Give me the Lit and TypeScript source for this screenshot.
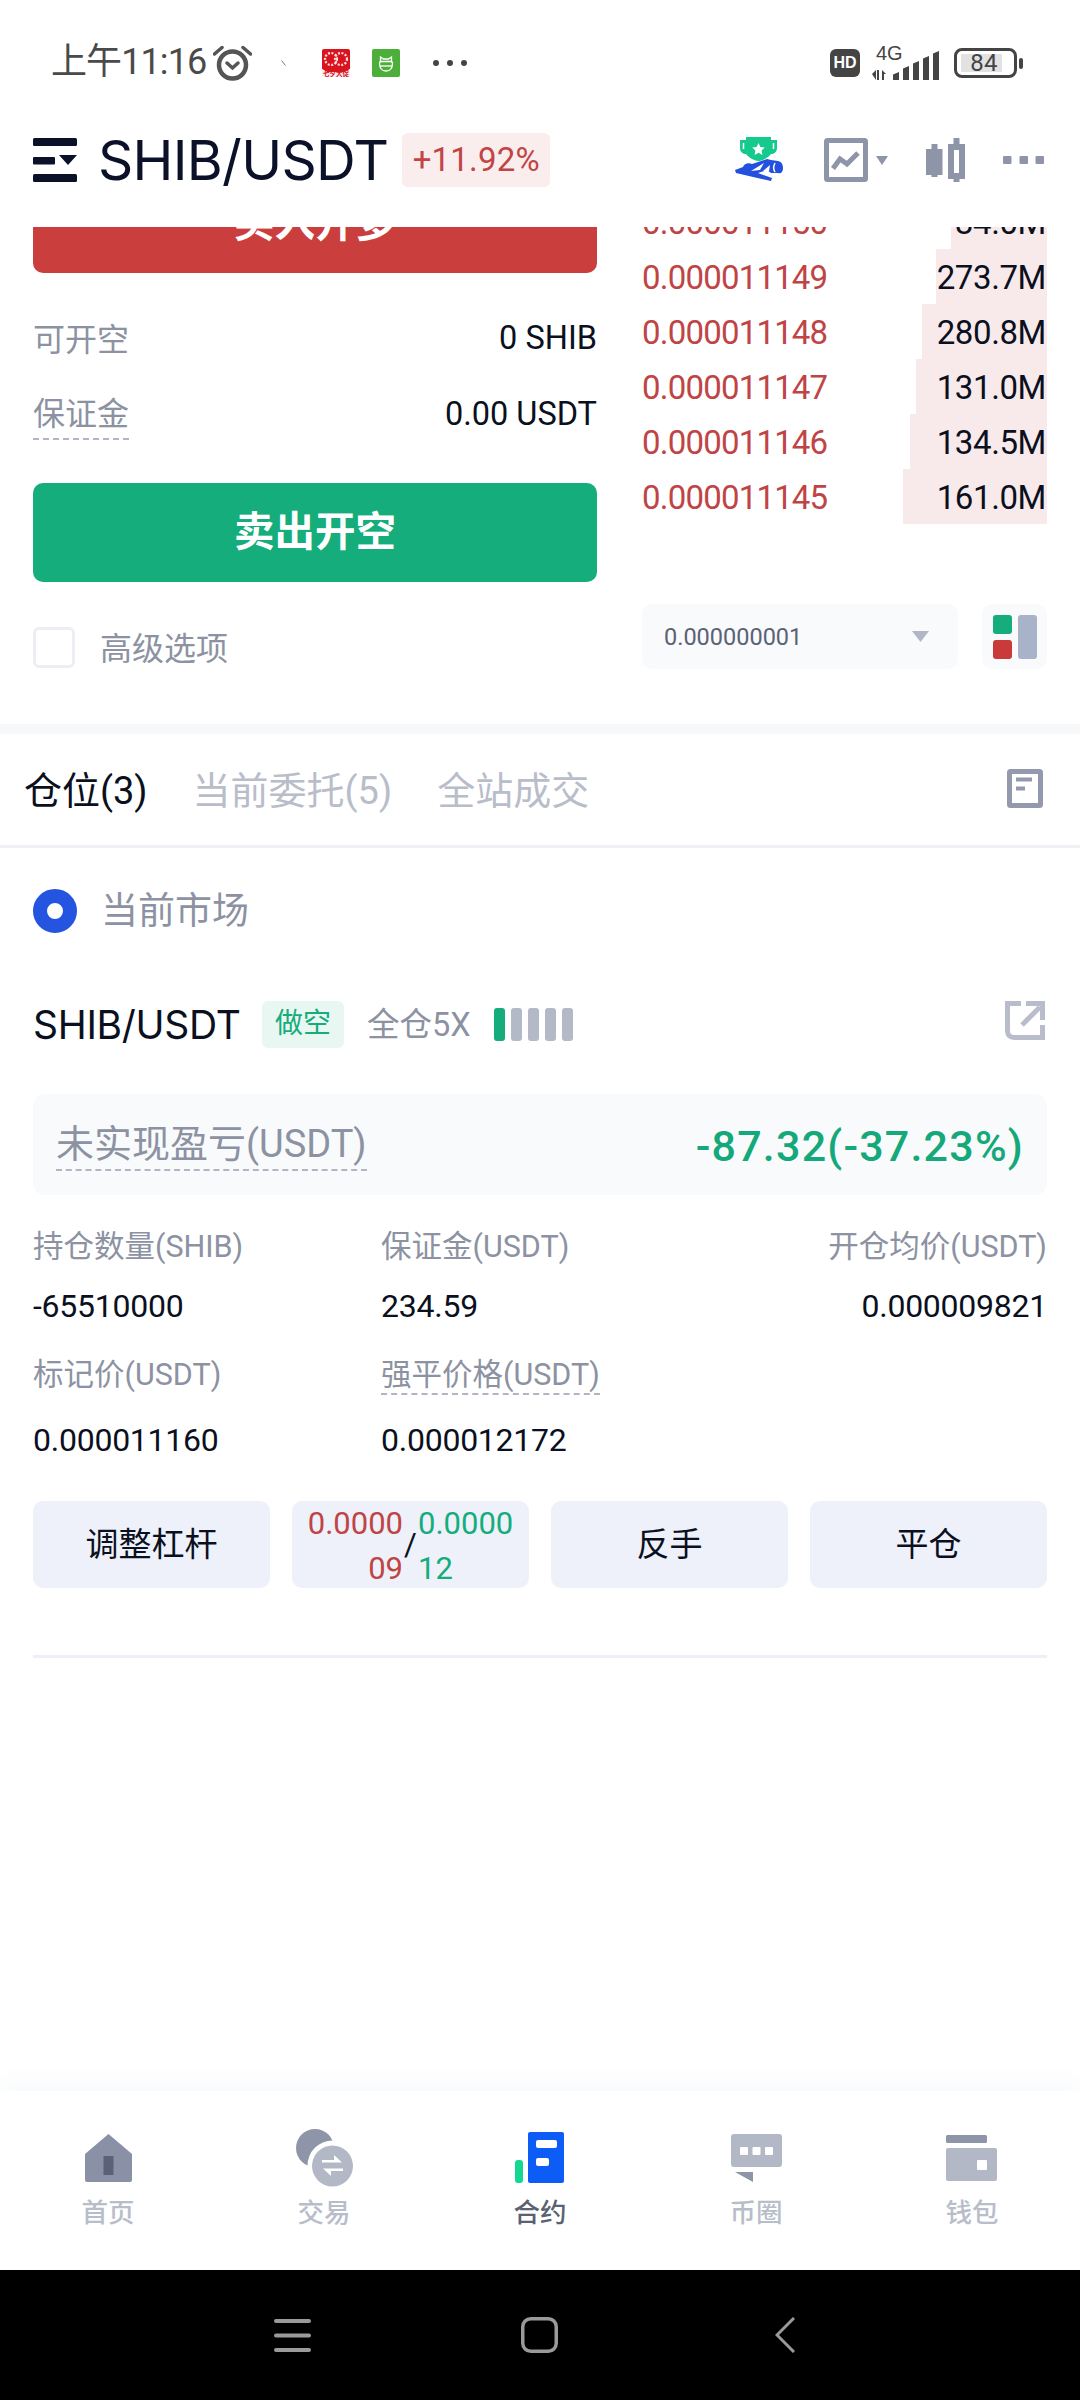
import { LitElement, html, css, svg } from "lit";
import { customElement } from "lit/decorators.js";

const book = [
  ["0.000011150", "84.0M", 96],
  ["0.000011149", "273.7M", 111],
  ["0.000011148", "280.8M", 125],
  ["0.000011147", "131.0M", 131],
  ["0.000011146", "134.5M", 137],
  ["0.000011145", "161.0M", 144],
] as const;

const nav = [
  { t: "首页", w: 47, h: 48, vb: "0 0 47 48", i: svg`<path d="M23.5 0L47 20V46q0 2-2 2H2q-2 0-2-2V20Z" fill="#8a90a5"/><rect x="18.500" y="22" width="10" height="19" fill="#5b6178"/>` },
  { t: "交易", w: 57, h: 58, vb: "0 0 57 58", i: svg`<circle cx="19" cy="19" r="19" fill="#8f95a8"/><circle cx="36.500" cy="36.500" r="25" fill="#fff"/><circle cx="36.500" cy="37" r="20.500" fill="#b3b8c7"/><path d="M26 33.500H46L38 26V31H26Z M47 39.500H27L35 47V42H47Z" fill="#fff"/>` },
  { t: "合约", w: 50, h: 52, vb: "0 0 50 52", on: true, i: svg`<rect y="28" width="8" height="23" rx="3" fill="#12d992"/><rect x="13" width="36" height="51" rx="2" fill="#0d5cf5"/><rect x="21" y="8" width="21" height="8" rx="2" fill="#fff"/><rect x="21" y="26" width="13" height="8" rx="2" fill="#fff"/>` },
  { t: "币圈", w: 51, h: 48, vb: "0 0 51 48", i: svg`<rect width="51" height="33" rx="3" y="0" fill="#b3b8c7"/><rect x="9" y="13" width="8" height="8" rx="1" fill="#fff"/><rect x="21.500" y="13" width="8" height="8" rx="1" fill="#fff"/><rect x="34" y="13" width="8" height="8" rx="1" fill="#fff"/><path d="M4 38H22V48Z" fill="#8f95a8"/>` },
  { t: "钱包", w: 52, h: 47, vb: "0 0 52 47", i: svg`<rect width="41" height="8" rx="1.500" fill="#8f95a8"/><rect y="13" width="51" height="33" rx="2" fill="#b3b8c7"/><rect x="31" y="25" width="10" height="10" rx="1" fill="#fff"/>` },
];

@customElement("app-root")
export class AppRoot extends LitElement {
  static styles = css`
    :host {
      display: flex;
      flex-direction: column;
      width: 1080px;
      height: 2400px;
      background: #fff;
      overflow: hidden;
      color: #0a1020;
      font-family: "Roboto", "Noto Sans CJK SC", sans-serif;
    }
    svg { display: block; flex: none; }
    .status {
      height: 110px; flex: none; box-sizing: border-box; padding: 16px 0 0 51px;
      display: flex; align-items: center; color: #4a4a4a;
    }
    .time { font-size: 36px; line-height: 40px; padding-bottom: 2px; letter-spacing: -0.9px; width: 162px; white-space: nowrap; }
    .tick { margin-left: 29px; }
    .appicon { margin-left: 36px; }
    .appicon + .appicon { margin-left: 22px; }
    .sdots { margin-left: 33px; }
    .sright { margin-left: auto; margin-right: 57px; display: flex; align-items: center; }
    .hd {
      width: 30px; height: 28px; border-radius: 6px; background: #444; color: #fff;
      font: 700 16px/28px "Liberation Sans", sans-serif; text-align: center;
    }
    .net { margin-left: 12px; }
    .battery { margin-left: 14px; display: flex; align-items: center; gap: 2px; }
    .cell {
      box-sizing: border-box; width: 63px; height: 30px; border: 3px solid #444; border-radius: 8px;
      padding: 3px 12px 3px 4px; display: flex;
    }
    .level {
      flex: 1; background: #e2e2e2; font-size: 24px; line-height: 18px; text-align: center;
      color: #444; white-space: nowrap; padding-left: 5px; letter-spacing: 0.3px;
    }
    .nub { width: 4px; height: 11px; border-radius: 2px; background: #444; }

    .head {
      height: 117px; flex: none; box-sizing: border-box; padding: 0 36px 17px 33px;
      display: flex; align-items: center; background: #fff; position: relative; z-index: 1;
    }
    .pair { margin-left: 21px; font: 400 55px/1 "Inter", sans-serif; letter-spacing: -0.7px; color: #0a1128; }
    .chg {
      margin-left: 14px; height: 54px; width: 148px; border-radius: 6px; background: #f9eded; color: #c24444;
      font-size: 33px; letter-spacing: 0.2px; line-height: 54px; text-align: center; white-space: nowrap;
    }
    .tools { margin-left: auto; display: flex; align-items: center; }
    .t-chart { margin-left: 40px; }
    .t-tri { margin-left: 8px; }
    .t-candle { margin-left: 38px; }
    .t-dots { margin-left: 38px; }

    .scroll { flex: 1; min-height: 0; overflow: hidden; }
    .trade {
      height: 550px; margin-top: -53px; box-sizing: border-box; padding: 0 33px; display: flex; justify-content: space-between;
    }
    .left { width: 564px; }
    .right { width: 405px; padding-top: 20px; }
    .act {
      height: 99px; border-radius: 10px; color: #fff; font-size: 40.500px; font-weight: 700; line-height: 98px; text-align: center;
    }
    .buy { background: #cb3e3e; margin-bottom: 26px; }
    .sell { background: #14ad7b; margin-top: 32px; }
    .info { height: 76px; display: flex; align-items: center; justify-content: space-between; }
    .muted { color: #8c92a2; font-size: 32px; }
    .dash { border-bottom: 2px dashed #b0b5c2; }
    .info .dash { line-height: 48px; margin-top: 4px; }
    .val { font-size: 32.500px; padding-top: 2px; }
    .opt { margin-top: 45px; height: 41px; display: flex; align-items: center; gap: 25px; }
    .opt .muted { padding-bottom: 4px; }
    .box { box-sizing: border-box; width: 42px; height: 41px; border: 3px solid #eceef3; border-radius: 6px; }

    .row { height: 55px; box-sizing: border-box; padding-top: 2px; position: relative; display: flex; align-items: center; justify-content: space-between; }
    .depth { position: absolute; right: 0; top: 0; bottom: 0; background: #f8eaea; }
    .price { position: relative; color: #c04445; font-size: 33px; letter-spacing: -0.8px; }
    .qty { position: relative; font-size: 33px; padding-right: 1px; letter-spacing: -0.4px; }
    .ctrl { margin-top: 80px; display: flex; justify-content: space-between; }
    .select {
      box-sizing: border-box; width: 316px; height: 65px; border-radius: 10px; background: #f9fafc;
      padding: 0 29px 0 22px; display: flex; align-items: center; justify-content: space-between;
      color: #5a6274; font-size: 23.500px;
    }
    .layout { width: 65px; height: 65px; border-radius: 10px; background: #f9fafc; display: flex; align-items: center; justify-content: center; }

    .gap { height: 10px; background: #f7f8fa; }
    .tabs {
      box-sizing: border-box; padding: 0 37px 5px 24px; display: flex; align-items: center;
      border-bottom: 3px solid #eef0f6; height: 114px; gap: 45px; font-size: 38px; color: #b8bdc9;
    }
    .tabs .on { color: #0a1020; }
    .tabs svg { margin-left: auto; margin-top: 3px; }
    .market { margin-top: 41px; padding-left: 33px; display: flex; align-items: center; gap: 24px; font-size: 37px; color: #8c92a2; height: 44px; }
    .market span { padding-bottom: 6px; }
    .radio { box-sizing: border-box; width: 44px; height: 44px; border-radius: 50%; border: 14px solid #2454e0; background: #fff; }

    .pos { padding: 0 33px; }
    .sym { margin-top: 68px; height: 47px; display: flex; align-items: center; }
    .sym b { font: 400 39px/1 "Inter", sans-serif; letter-spacing: -0.3px; width: 229px; }
    .tag { width: 82px; height: 47px; border-radius: 6px; background: #e8f7f1; color: #16ad7b; font-size: 28px; line-height: 46px; text-align: center; }
    .mode { margin-left: 23px; padding-bottom: 6px; color: #8c92a2; font-size: 32.500px; width: 127px; white-space: nowrap; }
    .bars { display: flex; gap: 6px; }
    .bars i { width: 11px; height: 33px; border-radius: 3px; background: #b3b9c7; }
    .bars i:first-child { background: #14ad7b; }
    .sym svg { margin-left: auto; margin-right: 2px; margin-top: -8px; }

    .pnl {
      margin-top: 46px; height: 101px; box-sizing: border-box; padding: 0 23px; border-radius: 12px; background: #f9fafc;
      display: flex; align-items: center; justify-content: space-between;
    }
    .pnl .muted { font-size: 38px; }
    .pnl .dash { line-height: 50px; }
    .pnl-v { color: #14a87a; font-size: 43px; font-weight: 500; margin-top: 2px; letter-spacing: 1.2px; white-space: nowrap; }

    .stats { margin-top: 32px; display: grid; grid-template-columns: 348px 348px 1fr; row-gap: 29px; }
    .stat { display: flex; flex-direction: column; gap: 19px; align-items: flex-start; }
    .stat.end { align-items: flex-end; }
    .stat .muted { font-size: 30.500px; line-height: 40px; white-space: nowrap; }
    .stat .num { font-size: 32px; line-height: 40px; letter-spacing: -0.25px; }
    .tall { min-height: 46px; }
    .stat .dash { line-height: 40px; padding-bottom: 1px; }

    .btns { margin-top: 41px; display: flex; gap: 22px; }
    .btn { flex: 1; height: 87px; border-radius: 10px; background: #eef1fa; font-size: 33px; line-height: 87px; text-align: center; }
    .tp { display: flex; justify-content: center; line-height: 45px; font-size: 31px; }
    .tp span { width: 97px; }
    .tp .r { color: #c04445; text-align: right; }
    .tp .g { color: #14ad7b; text-align: left; }
    .tp .sl { width: 15px; color: #0a1020; line-height: 87px; }
    .rule { margin-top: 67px; height: 3px; background: #eef0f5; }

    .nav {
      flex: none; height: 179px; box-sizing: border-box; padding-top: 38px; background: #fff;
      display: grid; grid-template-columns: repeat(5, 1fr);
      box-shadow: 0 -14px 18px rgba(60, 80, 140, 0.025);
    }
    .item { display: flex; flex-direction: column; align-items: center; font-size: 26.500px; font-weight: 500; color: #b8bdca; }
    .item.on { color: #5a6172; }
    .ic { height: 58px; display: flex; align-items: center; margin-bottom: 6px; }
    .item span { line-height: 40px; }
    .sys { flex: none; height: 130px; background: #000; display: grid; grid-template-columns: 311px 247px 237px; align-items: center; justify-items: end; }
  `;

  render() {
    return html`
      <div class="status">
        <span class="time">上午11:16</span>
        <svg width="39" height="36" viewBox="0 0 39 36" fill="none" stroke="#555" stroke-linecap="round">
          <circle cx="19.500" cy="20" r="13.500" stroke-width="4.500"/>
          <path d="M1.500 9L9 2.500M30 2.500L37.500 9" stroke-width="3.500"/>
          <path d="M14 18l5.500 5 5.500-5" stroke-width="3.500"/>
        </svg>
        <svg class="tick" width="5" height="6" viewBox="0 0 5 6" fill="none" stroke="#777"><path d="M0.500 0.500L4.500 5.500"/></svg>
        <svg class="appicon" width="28" height="28" viewBox="0 0 28 28">
          <path d="M0 2Q0 0 2 0H26Q28 0 28 2V20L23 23H5L0 20Z" fill="#d8141f"/>
          <path d="M0 20L5 23H23L28 20V28H0Z" fill="#fbe8ea"/>
          <circle cx="9" cy="10" r="6" fill="none" stroke="#fdd" stroke-width="2.200" stroke-dasharray="2 1.500"/>
          <circle cx="19" cy="10" r="6" fill="none" stroke="#fdd" stroke-width="2.200" stroke-dasharray="2 1.500"/>
          <text x="14" y="27" font-size="6.500" font-weight="700" text-anchor="middle" fill="#d8141f" font-family="Noto Sans CJK SC">七夕大促</text>
        </svg>
        <svg class="appicon" width="28" height="28" viewBox="0 0 28 28" fill="none" stroke="#fff" stroke-width="1.300">
          <rect width="28" height="28" rx="2" fill="#4caf3a" stroke="none"/>
          <path d="M8.500 13.500V8L11.500 10H16.500L19.500 8V13.500"/>
          <path d="M7.500 14Q7.500 13 8.500 12.500H19.500Q20.500 13 20.500 14C20.500 19 18 22 14 22S7.500 19 7.500 14Z"/>
          <path d="M8 17H20"/>
        </svg>
        <svg class="sdots" width="34" height="6" viewBox="0 0 34 6" fill="#444"><circle cx="3" cy="3" r="3"/><circle cx="17" cy="3" r="3"/><circle cx="31" cy="3" r="3"/></svg>
        <div class="sright">
          <div class="hd">HD</div>
          <svg class="net" width="68" height="42" viewBox="0 -3 68 42" fill="#444">
            <text x="4" y="15" font-size="20" font-family="Liberation Sans">4G</text>
            <path d="M0 29l4-4v10zM5 25h2v10H5zM10 25l4 4h-2v6h-2z"/>
            <path d="M21 29.500L27 27V35H21Z"/>
            <path d="M31 23.500L37 21V35H31Z"/>
            <path d="M41 18.500L47 16V35H41Z"/>
            <path d="M51 13.500L57 11V35H51Z"/>
            <path d="M61 8.500L67 6V35H61Z"/>
          </svg>
          <div class="battery"><div class="cell"><div class="level">84</div></div><div class="nub"></div></div>
        </div>
      </div>

      <div class="head">
        <svg width="44" height="44" viewBox="0 0 44 44" fill="#0a1128">
          <rect width="44" height="8" rx="1.500"/>
          <rect y="19" width="22" height="7.500" rx="1"/>
          <path d="M26 17H44L35 27Z"/>
          <rect y="36" width="44" height="8" rx="1.500"/>
        </svg>
        <span class="pair">SHIB/USDT</span>
        <span class="chg">+11.92%</span>
        <div class="tools">
          <svg width="50" height="46" viewBox="0 0 50 46">
            <path d="M12 0H37V3H43V11C43 15 40 17 37 17C34 21 28 24 24.500 24C21 24 15 21 12 17C9 17 6 15 6 11V3H12Z" fill="#16c98d"/>
            <path d="M9.500 6V12M39.500 6V12" stroke="#fff" stroke-width="1.500"/>
            <path d="M24.500 6l1.900 4 4.400.5-3.200 3 .8 4.400-3.900-2.200-3.900 2.200.8-4.400-3.200-3 4.400-.5Z" fill="#fff"/>
            <path d="M1 33L9 30C10 27 14 25 18 27L33 22L37 23L44 24C48 25 49 28 49 31C49 35 47 37 44 36L37 36L33 33L24 36L38 41L37 44L2 36Z" fill="#2350dd"/>
            <path d="M17 34L30 26L26 33Z M29 34L36 28L35 34Z" fill="#fff"/>
            <path d="M41 26C39.500 29 39.500 33 41 35" fill="none" stroke="#fff" stroke-width="1.500"/>
          </svg>
          <svg class="t-chart" width="44" height="44" viewBox="0 0 44 44" fill="none" stroke="#8f95a8" stroke-width="5">
            <rect x="2.500" y="2.500" width="39" height="39" rx="1"/>
            <path d="M9 30.500L16 21L23 26L34 15"/>
          </svg>
          <svg class="t-tri" width="12" height="9" viewBox="0 0 12 9" fill="#8f95a8"><path d="M0 0H12L6 9Z"/></svg>
          <svg class="t-candle" width="39" height="44" viewBox="0 0 39 44" fill="none" stroke="#8f95a8">
            <rect x="3" y="14" width="10.500" height="20" stroke-width="6"/>
            <path d="M8.500 6V39M30.500 0V44" stroke-width="6"/>
            <rect x="25" y="9" width="11" height="29" stroke-width="6" fill="#fff"/>
          </svg>
          <svg class="t-dots" width="41" height="8" viewBox="0 0 41 8" fill="#8f95a8"><rect width="8.500" height="8" rx="1"/><rect x="16.500" width="8.500" height="8" rx="1"/><rect x="32.500" width="8.500" height="8" rx="1"/></svg>
        </div>
      </div>

      <div class="scroll">
        <div class="trade">
          <div class="left">
            <div class="act buy">买入开多</div>
            <div class="info"><span class="muted">可开空</span><span class="val">0 SHIB</span></div>
            <div class="info"><span class="muted dash">保证金</span><span class="val">0.00 USDT</span></div>
            <div class="act sell">卖出开空</div>
            <div class="opt"><div class="box"></div><span class="muted">高级选项</span></div>
          </div>
          <div class="right">
            ${book.map(([p, q, w]) => html`<div class="row"><div class="depth" style="width:${w}px"></div><span class="price">${p}</span><span class="qty">${q}</span></div>`)}
            <div class="ctrl">
              <div class="select"><span>0.000000001</span>
                <svg width="17" height="11" viewBox="0 0 17 11" fill="#b0b6c6"><path d="M0 0H17L8.500 11Z"/></svg>
              </div>
              <div class="layout">
                <svg width="44" height="44" viewBox="0 0 44 44">
                  <rect width="19" height="19" rx="3" fill="#14ad7b"/>
                  <rect y="25" width="19" height="19" rx="3" fill="#cb3a3a"/>
                  <rect x="25" width="19" height="44" rx="3" fill="#a8b2c8"/>
                </svg>
              </div>
            </div>
          </div>
        </div>
        <div class="gap"></div>
        <div class="tabs">
          <span class="on">仓位(3)</span><span>当前委托(5)</span><span>全站成交</span>
          <svg width="36" height="39" viewBox="0 0 36 39" fill="none" stroke="#9499ae">
            <rect x="2.500" y="2.500" width="31" height="34" rx="1" stroke-width="5"/>
            <path d="M9 10.500H25M9 19.500H18" stroke-width="4"/>
          </svg>
        </div>
        <div class="market"><div class="radio"></div><span>当前市场</span></div>
        <div class="pos">
          <div class="sym">
            <b>SHIB/USDT</b><span class="tag">做空</span><span class="mode">全仓5X</span>
            <div class="bars"><i></i><i></i><i></i><i></i><i></i></div>
            <svg width="40" height="39" viewBox="0 0 40 39" fill="none" stroke="#b9bdcb" stroke-width="5">
              <path d="M16 2.500H2.500V30C2.500 34 5 36.500 9 36.500H37.500V24"/>
              <path d="M17 24L35 6"/>
              <path d="M21 2.500H37.500V19"/>
            </svg>
          </div>
          <div class="pnl"><span class="muted dash">未实现盈亏(USDT)</span><span class="pnl-v">-87.32(-37.23%)</span></div>
          <div class="stats">
            <div class="stat"><span class="muted">持仓数量(SHIB)</span><span class="num">-65510000</span></div>
            <div class="stat"><span class="muted">保证金(USDT)</span><span class="num">234.59</span></div>
            <div class="stat end"><span class="muted">开仓均价(USDT)</span><span class="num">0.000009821</span></div>
            <div class="stat"><span class="muted tall">标记价(USDT)</span><span class="num">0.000011160</span></div>
            <div class="stat"><div class="tall"><span class="muted dash">强平价格(USDT)</span></div><span class="num">0.000012172</span></div>
          </div>
          <div class="btns">
            <div class="btn">调整杠杆</div>
            <div class="btn tp"><span class="r">0.0000<br />09</span><span class="sl">/</span><span class="g">0.0000<br />12</span></div>
            <div class="btn">反手</div>
            <div class="btn">平仓</div>
          </div>
          <div class="rule"></div>
        </div>
      </div>

      <div class="nav">
        ${nav.map((n) => html`<div class="item ${n.on ? "on" : ""}"><div class="ic"><svg width=${n.w} height=${n.h} viewBox=${n.vb}>${n.i}</svg></div><span>${n.t}</span></div>`)}
      </div>
      <div class="sys">
        <svg width="37" height="33" viewBox="0 0 37 33" fill="#9a9a9a"><rect width="37" height="4" rx="2"/><rect y="14.500" width="37" height="4" rx="2"/><rect y="29" width="37" height="4" rx="2"/></svg>
        <svg width="37" height="36" viewBox="0 0 37 36" fill="none" stroke="#9a9a9a" stroke-width="3.500"><rect x="1.750" y="1.750" width="33.500" height="32.500" rx="8"/></svg>
        <svg width="20" height="36" viewBox="0 0 20 36" fill="none" stroke="#9a9a9a" stroke-width="3"><path d="M19 1L2 18L19 35"/></svg>
      </div>
    `;
  }
}
